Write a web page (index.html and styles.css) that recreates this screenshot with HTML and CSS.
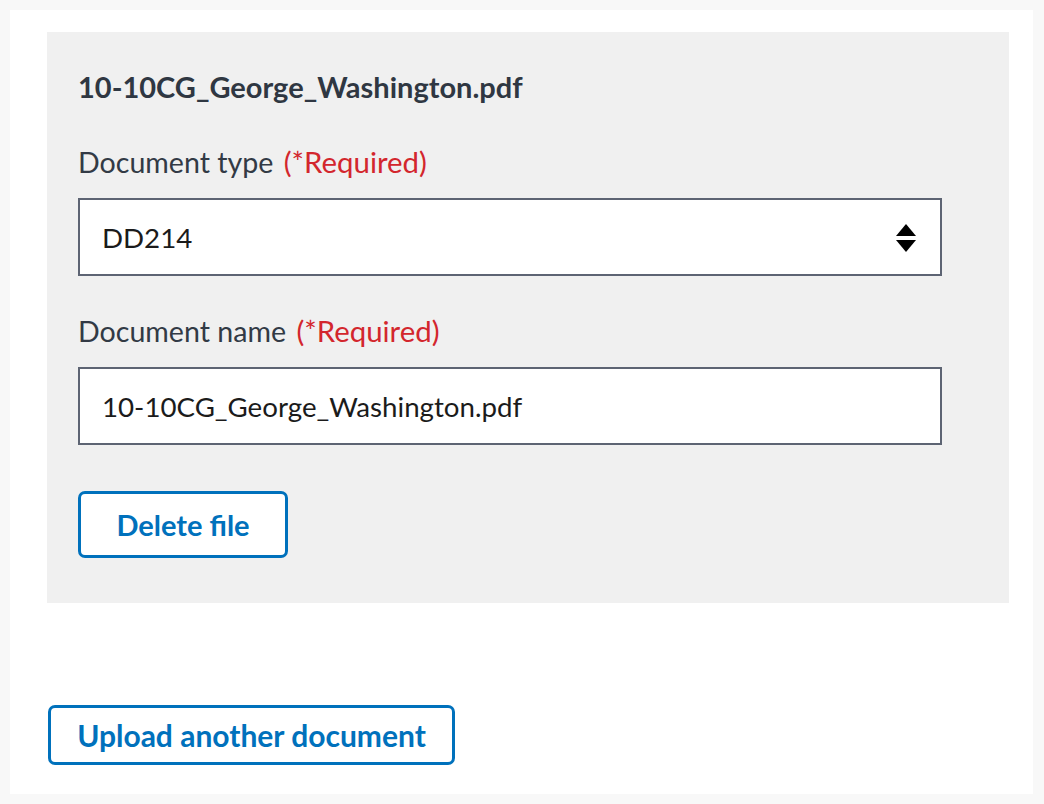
FILE: index.html
```html
<!DOCTYPE html>
<html lang="en">
<head>
<meta charset="utf-8">
<title>Upload documents</title>
<link rel="stylesheet" href="styles.css">
</head>
<body>
<div class="panel">
  <div class="card">
    <div class="file-title">10-10CG_George_Washington.pdf</div>
    <div class="label">Document type <span class="req">(*Required)</span></div>
    <div class="control select">
      <span class="value">DD214</span>
      <svg class="arrows" width="20" height="28" viewBox="0 0 20 28" aria-hidden="true">
        <polygon points="10,0 20,12 0,12" fill="#000"/>
        <polygon points="0,16 20,16 10,28" fill="#000"/>
      </svg>
    </div>
    <div class="label">Document name <span class="req">(*Required)</span></div>
    <div class="control input"><span class="value">10-10CG_George_Washington.pdf</span></div>
    <div class="btn delete">Delete file</div>
  </div>
  <div class="btn upload">Upload another document</div>
</div>
</body>
</html>
```
FILE: styles.css
```css
* { box-sizing: border-box; }
html, body { margin: 0; }
body {
  background: #f8f8f8;
  padding: 10px 11px 10px 10px;
  font-family: "Lato", "Open Sans", sans-serif;
  color: #323a45;
}
.panel {
  background: #fff;
  height: 784px;
  padding: 22px 24px 0 37px;
}
.card {
  background: #f0f0f0;
  padding: 35px 67px 45px 31px;
  display: flex;
  flex-direction: column;
  align-items: flex-start;
}
.file-title {
  font-size: 29px;
  font-weight: 700;
  line-height: 40px;
  color: #2f3742;
}
.label {
  font-size: 28.6px;
  line-height: 40px;
  margin-top: 35px;
  color: #323a45;
}
.req { color: #d3262d; margin-left: 3px; font-size: 29.4px; }
.control {
  margin-top: 16px;
  width: 864px;
  height: 78px;
  background: #fff;
  border: 2px solid #5d6473;
  display: flex;
  align-items: center;
  justify-content: space-between;
  padding: 0 24px 0 22px;
  font-size: 27.7px;
  color: #1b1b1b;
}
.arrows { margin-top: 1px; }
.btn {
  display: flex;
  align-items: center;
  justify-content: center;
  border: 3px solid #0071bc;
  border-radius: 7px;
  color: #0071bc;
  font-weight: 700;
  font-size: 29px;
  background: #fff;
}
.delete {
  margin-top: 46px;
  width: 210px;
  height: 67px;
}
.upload {
  margin-top: 102px;
  margin-left: 1px;
  width: 407px;
  height: 60px;
  font-size: 30px;
}
```
